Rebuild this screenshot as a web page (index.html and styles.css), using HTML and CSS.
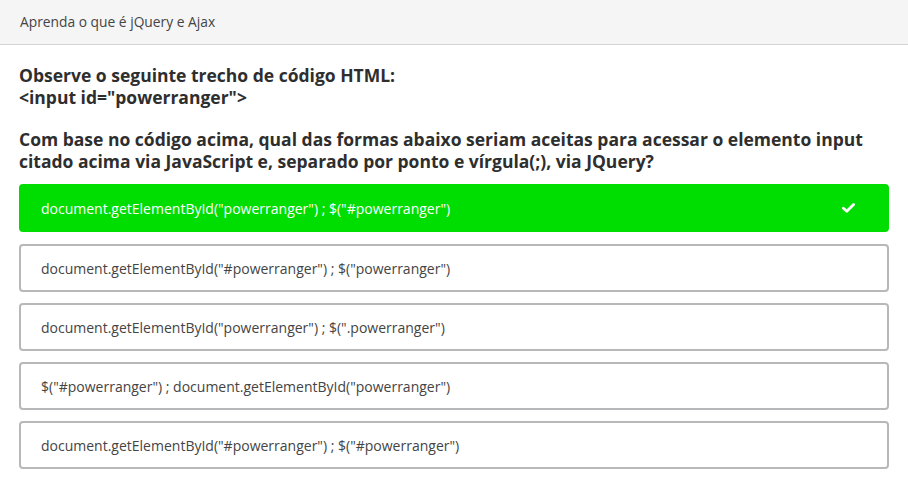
FILE: index.html
```html
<!DOCTYPE html>
<html lang="pt">
<head>
<meta charset="utf-8">
<link rel="stylesheet" href="styles.css">
</head>
<body>
<div class="topbar">Aprenda o que é jQuery e Ajax</div>
<main class="quiz">
  <p class="q">Observe o seguinte trecho de código HTML:<br>&lt;input id="powerranger"&gt;</p>
  <p class="q q2">Com base no código acima, qual das formas abaixo seriam aceitas para acessar o elemento input citado acima via JavaScript e, separado por ponto e vírgula(;), via JQuery?</p>
  <ul class="options">
    <li class="opt correct"><span>document.getElementById("powerranger") ; $("#powerranger")</span>
      <svg class="check" width="13" height="10" viewBox="0 0 13 10"><path d="M1.4 5.2 L4.8 8.3 L11.6 1.6" fill="none" stroke="#fff" stroke-width="2.8" stroke-linecap="round" stroke-linejoin="round"/></svg>
    </li>
    <li class="opt"><span>document.getElementById("#powerranger") ; $("powerranger")</span></li>
    <li class="opt"><span>document.getElementById("powerranger") ; $(".powerranger")</span></li>
    <li class="opt"><span>$("#powerranger") ; document.getElementById("powerranger")</span></li>
    <li class="opt"><span>document.getElementById("#powerranger") ; $("#powerranger")</span></li>
  </ul>
</main>
</body>
</html>
```

FILE: styles.css
```css
* { box-sizing: border-box; }
html, body { margin: 0; padding: 0; background: #fff; }
body { font-family: "Open Sans", "Noto Sans", sans-serif; color: #333; }
.topbar {
  height: 45px;
  background: #f5f5f6;
  border-bottom: 1px solid #d4d4d6;
  font-size: 13.8px;
  line-height: 44px;
  padding-left: 20px;
  color: #444;
}
.quiz { padding: 19px 19px 0 19px; }
.q {
  margin: 0;
  font-size: 17.5px;
  font-weight: 700;
  line-height: 22px;
  color: #2e2e2e;
}
.q2 { margin-top: 20px; }
.options { list-style: none; margin: 12px 0 0 0; padding: 0; }
.opt {
  height: 48px;
  margin-bottom: 11px;
  border: 2px solid #b7b8ba;
  border-radius: 4px;
  display: flex;
  align-items: center;
  justify-content: space-between;
  padding: 0 20px 0 20px;
  font-size: 14px;
  color: #444;
}
.correct {
  background: #00dd00;
  border-color: #00dd00;
  color: #fff;
  margin-bottom: 12px;
}
.check { margin-right: 12px; }
```
